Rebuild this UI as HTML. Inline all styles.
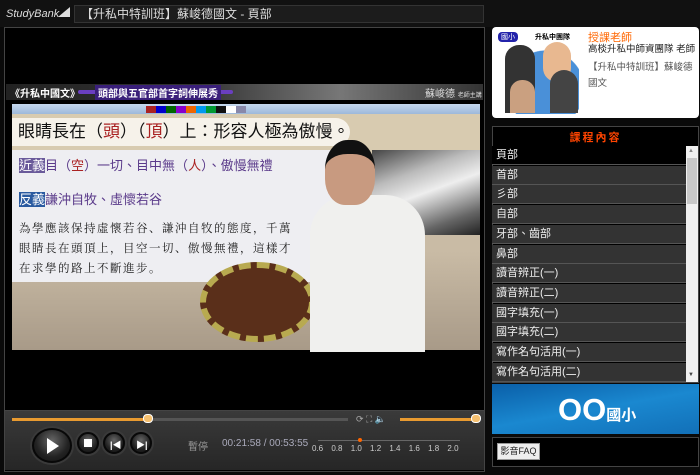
<!DOCTYPE html><html><head><meta charset="utf-8"><style>
*{margin:0;padding:0;box-sizing:border-box}
body{width:700px;height:475px;background:#0a0a0a;position:relative;overflow:hidden;font-family:"Liberation Sans","Noto Sans CJK TC",sans-serif}
.a{position:absolute}
.row{position:absolute;left:0;width:194px;height:19px;background:#333;border-bottom:1px solid #555;color:#eee;font-size:11px;line-height:19px;padding-left:4px}
.btn{position:absolute;border-radius:50%;background:radial-gradient(circle at 50% 35%,#666,#222 60%,#111);border:2px solid #080808;box-shadow:0 0 0 2px #3a3a3a}
</style></head><body>
<div class="a" style="left:0;top:0;width:700px;height:27px;background:#111"></div>
<div class="a" style="left:6px;top:8px;color:#ddd;font-size:11px;font-style:italic">StudyBank</div>
<div class="a" style="left:58px;top:7px;width:12px;height:10px;background:#ddd;clip-path:polygon(0 100%,100% 0,100% 100%)"></div>
<div class="a" style="left:74px;top:5px;width:410px;height:18px;background:#1c1c1c;border:1px solid #333;color:#ddd;font-size:12px;line-height:16px;padding-left:6px">【升私中特訓班】蘇峻德國文 - 頁部</div>
<div class="a" style="left:4px;top:27px;width:481px;height:445px;background:#000;border:1px solid #444"></div>
<div class="a" style="left:6px;top:84px;width:477px;height:16px;background:linear-gradient(90deg,#222,#333 40%,#777 70%,#333)"></div>
<div class="a" style="left:10px;top:85px;color:#fff;font-size:10px;font-weight:bold">《升私中國文》</div>
<div class="a" style="left:78px;top:90px;width:155px;height:4px;background:#6a3fc0;border-radius:2px"></div>
<div class="a" style="left:95px;top:85px;color:#fff;font-size:10px;font-weight:bold;background:#3a1f7a;padding:0 3px">頭部與五官部首字詞伸展秀</div>
<div class="a" style="left:425px;top:85px;color:#ddd;font-size:10px">蘇峻德 <span style="font-size:6px">老師主講</span></div>
<div class="a" style="left:12px;top:104px;width:468px;height:246px;background:linear-gradient(#c9bba5 60%,#a89a88)"></div>
<div class="a" style="left:12px;top:104px;width:468px;height:10px;background:linear-gradient(#c5d8ee,#9db8da)"></div>
<div class="a" style="left:146px;top:106px;width:100px;height:7px;background:linear-gradient(90deg,#a22 10%,#00c 10% 20%,#060 20% 30%,#80c 30% 40%,#e60 40% 50%,#09e 50% 60%,#093 60% 70%,#111 70% 80%,#fff 80% 90%,#88a 90%)"></div>
<div class="a" style="left:12px;top:114px;width:468px;height:40px;background:#d8cbb0"></div>
<div class="a" style="left:12px;top:118px;width:338px;height:28px;background:#f6f2ea;border-radius:0 14px 14px 0;font-size:17px;line-height:28px;padding-left:6px;color:#111;white-space:nowrap">眼睛長在（<span style="color:#a22">頭</span>）（<span style="color:#a22">頂</span>）上：形容人極為傲慢。</div>
<div class="a" style="left:12px;top:150px;width:320px;height:132px;background:#eeeef2"></div>
<div class="a" style="left:19px;top:155px;font-size:13px;color:#5a3a8a"><span style="background:#6a5a9a;color:#fff">近義</span>目（<span style="color:#a22">空</span>）一切、目中無（<span style="color:#a22">人</span>）、傲慢無禮</div>
<div class="a" style="left:19px;top:189px;font-size:13px;color:#5a3a8a"><span style="background:#2a5aa0;color:#fff">反義</span>謙沖自牧、虛懷若谷</div>
<div class="a" style="left:19px;top:218px;font-size:11.5px;line-height:20px;color:#222;font-family:'Noto Serif CJK SC',serif;letter-spacing:1.5px">為學應該保持虛懷若谷、謙沖自牧的態度，千萬<br>眼睛長在頭頂上，目空一切、傲慢無禮，這樣才<br>在求學的路上不斷進步。</div>
<div class="a" style="left:372px;top:150px;width:108px;height:85px;background:linear-gradient(160deg,#444,#bbb 30%,#eee 50%,#666 80%,#222)"></div>
<div class="a" style="left:200px;top:262px;width:115px;height:80px;background:#5a2f1a;border-radius:50%;border:6px dashed #b8aa50"></div>
<div class="a" style="left:310px;top:195px;width:115px;height:160px;background:#f0f0ee;border-radius:40px 40px 0 0"></div>
<div class="a" style="left:325px;top:140px;width:50px;height:65px;background:#c89a80;border-radius:45% 45% 40% 40%;border-top:14px solid #111"></div>
<div class="a" style="left:6px;top:352px;width:477px;height:58px;background:#000"></div>
<div class="a" style="left:5px;top:410px;width:479px;height:60px;background:linear-gradient(#3a3a3a,#262626);border-top:1px solid #444"></div>
<div class="a" style="left:12px;top:418px;width:137px;height:3px;background:#e89a30"></div>
<div class="a" style="left:149px;top:418px;width:199px;height:3px;background:#555"></div>
<div class="a" style="left:143px;top:414px;width:10px;height:9px;border-radius:4px;background:#f5c070;border:1px solid #fff"></div>
<div class="a" style="left:356px;top:414px;color:#aaa;font-size:9px">⟳ ⛶ 🔈</div>
<div class="a" style="left:400px;top:418px;width:77px;height:3px;background:#e89a30"></div>
<div class="a" style="left:471px;top:414px;width:10px;height:9px;border-radius:4px;background:#f5c070;border:1px solid #fff"></div>
<div class="btn" style="left:32px;top:428px;width:40px;height:35px"></div>
<div class="a" style="left:47px;top:438px;width:0;height:0;border-left:12px solid #fff;border-top:8px solid transparent;border-bottom:8px solid transparent"></div>
<div class="btn" style="left:77px;top:432px;width:22px;height:22px"></div><div class="a" style="left:84px;top:439px;width:8px;height:8px;background:#fff"></div>
<div class="btn" style="left:103px;top:432px;width:22px;height:22px"></div><div class="a" style="left:110px;top:438px;color:#fff;font-size:9px;font-weight:bold">|◀</div>
<div class="btn" style="left:130px;top:432px;width:22px;height:22px"></div><div class="a" style="left:136px;top:438px;color:#fff;font-size:9px;font-weight:bold">▶|</div>
<div class="a" style="left:188px;top:438px;color:#999;font-size:10px">暫停</div>
<div class="a" style="left:222px;top:438px;color:#aab;font-size:10px">00:21:58 / 00:53:55</div>
<div class="a" style="left:318px;top:440px;width:142px;height:1px;background:#666"></div>
<div class="a" style="left:312px;top:444px;color:#ccc;font-size:8px;word-spacing:6px;white-space:nowrap">0.6 0.8 1.0 1.2 1.4 1.6 1.8 2.0</div>
<div class="a" style="left:358px;top:438px;width:4px;height:4px;border-radius:2px;background:#f60"></div>
<div class="a" style="left:492px;top:27px;width:207px;height:91px;background:#fff;border-radius:4px"></div>
<div class="a" style="left:496px;top:31px;width:83px;height:83px;background:radial-gradient(circle at 60% 70%,#4a90d8 50%,#fff 51%)"></div>
<div class="a" style="left:498px;top:32px;font-size:7px;background:#22a;color:#fff;padding:0 3px;border-radius:4px">國小</div>
<div class="a" style="left:535px;top:32px;font-size:7px;font-weight:bold">升私中團隊</div>
<div class="a" style="left:505px;top:45px;width:30px;height:68px;background:#333;border-radius:14px 14px 0 0"></div>
<div class="a" style="left:543px;top:42px;width:28px;height:40px;background:#e8b890;border-radius:14px"></div>
<div class="a" style="left:550px;top:70px;width:28px;height:43px;background:#444;border-radius:14px 14px 0 0"></div>
<div class="a" style="left:510px;top:80px;width:25px;height:33px;background:#caa080;border-radius:12px 12px 0 0"></div>
<div class="a" style="left:588px;top:29px;color:#f60;font-size:11px">授課老師</div>
<div class="a" style="left:588px;top:43px;color:#222;font-size:9.5px;line-height:14px;white-space:nowrap">高棪升私中師資團隊 老師</div>
<div class="a" style="left:588px;top:60px;color:#555;font-size:9.5px;line-height:16px;width:108px">【升私中特訓班】蘇峻德國文</div>
<div class="a" style="left:492px;top:126px;width:207px;height:257px;background:#000;border:1px solid #444"></div>
<div class="a" style="left:492px;top:129px;width:207px;color:#f40;font-size:11px;text-align:center;letter-spacing:2px;font-weight:bold">課程內容</div>
<div class="a" style="left:492px;top:146px;width:194px;height:236px;overflow:hidden">
<div class="row" style="top:0;background:#000">頁部</div>
<div class="row" style="top:19.7px">首部</div>
<div class="row" style="top:39.4px">彡部</div>
<div class="row" style="top:59.1px">自部</div>
<div class="row" style="top:78.8px">牙部、齒部</div>
<div class="row" style="top:98.5px">鼻部</div>
<div class="row" style="top:118.2px">讀音辨正(一)</div>
<div class="row" style="top:137.9px">讀音辨正(二)</div>
<div class="row" style="top:157.6px">國字填充(一)</div>
<div class="row" style="top:177.3px">國字填充(二)</div>
<div class="row" style="top:197px">寫作名句活用(一)</div>
<div class="row" style="top:216.7px">寫作名句活用(二)</div>
</div>
<div class="a" style="left:686px;top:146px;width:12px;height:236px;background:#f0f0f0"></div>
<div class="a" style="left:687px;top:158px;width:10px;height:46px;background:#c8c8c8"></div>
<div class="a" style="left:688px;top:148px;color:#888;font-size:6px">▲</div>
<div class="a" style="left:688px;top:372px;color:#444;font-size:6px">▼</div>
<div class="a" style="left:492px;top:384px;width:207px;height:50px;background:linear-gradient(170deg,#0a5fa8,#1a88d0 50%,#1270b8)"></div>
<div class="a" style="left:558px;top:392px;color:#fff;font-size:31px;font-weight:bold;line-height:36px">OO<span style="font-size:15px">國小</span></div>
<div class="a" style="left:492px;top:437px;width:207px;height:30px;background:#000;border:1px solid #444"></div>
<div class="a" style="left:497px;top:443px;width:43px;height:17px;background:#eee;border:1px solid #999;font-size:9px;line-height:15px;text-align:center;color:#222">影音FAQ</div>
</body></html>
